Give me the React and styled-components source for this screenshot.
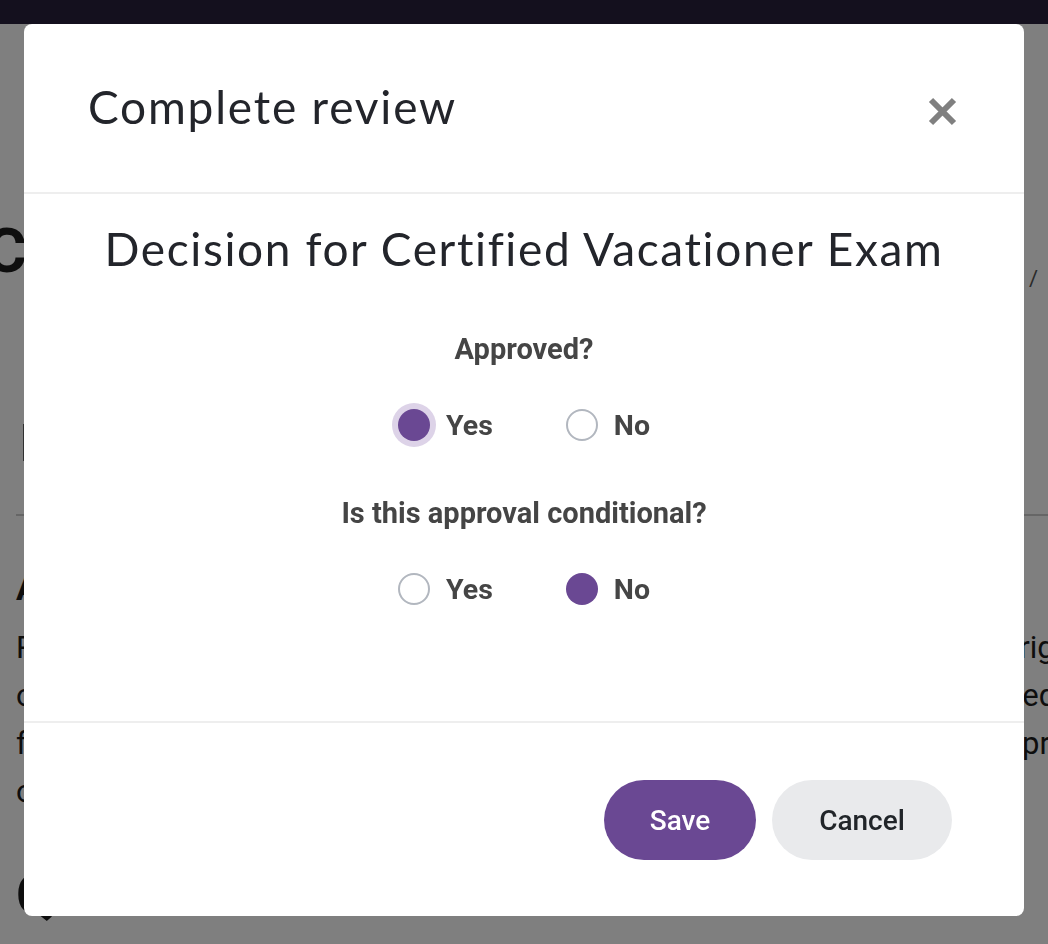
import React from "react";
import styled, { createGlobalStyle } from "styled-components";

const Global = createGlobalStyle`
  html, body { margin: 0; padding: 0; }
  body { width: 1048px; height: 944px; overflow: hidden; font-family: Roboto, "Liberation Sans", sans-serif; background: #fff; }
  * { box-sizing: border-box; }
`;

const Page = styled.div`
  position: relative;
  width: 1048px;
  height: 944px;
  overflow: hidden;
  background: #ffffff;
  color: #1c1c1c;
`;

const Nav = styled.div`
  height: 24px;
  background: #29203c;
`;

const Main = styled.div`
  padding-left: 16px;
`;

const TitleRow = styled.div`
  display: flex;
  justify-content: space-between;
  align-items: center;
  margin-top: 196px;
  height: 60px;
`;

const PageTitle = styled.h1`
  margin: 0 0 0 -30px;
  font-size: 62px;
  font-weight: 700;
  white-space: nowrap;
`;

const Crumbs = styled.div`
  font-size: 22px;
  color: #555;
  margin-right: 10px;
  margin-top: 56px;
  white-space: nowrap;
`;

const SectionTitle = styled.h2`
  margin: 134px 0 0 4px;
  font-size: 52px;
  font-weight: 700;
  line-height: 60px;
`;

const Rule = styled.hr`
  margin: 40px 0 0;
  border: 0;
  border-top: 2px solid #ccc;
`;

const SubTitle = styled.h3`
  margin: 52px 0 0;
  font-size: 34px;
  font-weight: 700;
  line-height: 40px;
`;

const Para = styled.p`
  margin: 16px 0 0;
  font-size: 31px;
  line-height: 48px;
`;

const Line = styled.span`
  display: block;
  white-space: nowrap;
`;

const QTitle = styled.h2`
  margin: 46px 0 0;
  font-size: 56px;
  font-weight: 700;
`;

const Overlay = styled.div`
  position: fixed;
  inset: 0;
  background: rgba(0, 0, 0, 0.5);
  display: flex;
  justify-content: center;
  align-items: flex-start;
  padding-top: 24px;
`;

const Modal = styled.div`
  width: 1000px;
  height: 892px;
  background: #fff;
  border-radius: 8px;
  display: flex;
  flex-direction: column;
  overflow: hidden;
`;

const Header = styled.div`
  height: 170px;
  display: flex;
  align-items: center;
  justify-content: space-between;
  padding: 0 67px 4px 64px;
  border-bottom: 2px solid #eeeeee;
`;

const ModalTitle = styled.h2`
  margin: 0;
  font-family: Lato, "Noto Sans", sans-serif;
  font-weight: 400;
  font-size: 46px;
  letter-spacing: 1.8px;
  color: #23252b;
`;

const CloseBtn = styled.button`
  border: 0;
  background: none;
  padding: 0;
  margin-top: 10px;
  width: 29px;
  height: 29px;
  display: flex;
  cursor: pointer;
`;

const Body = styled.div`
  flex: 1;
  display: flex;
  flex-direction: column;
  align-items: center;
  border-bottom: 2px solid #eeeeee;
`;

const Decision = styled.h3`
  margin: 28px 0 0;
  font-family: Lato, "Noto Sans", sans-serif;
  font-weight: 400;
  font-size: 46px;
  letter-spacing: 1.6px;
  line-height: 54px;
  color: #23252b;
`;

const Question = styled.div`
  margin-top: ${(p) => p.$mt}px;
  font-size: 29px;
  font-weight: 700;
  color: #454545;
  line-height: 34px;
`;

const RadioRow = styled.div`
  display: flex;
  align-items: center;
  gap: 73px;
  margin-top: 41px;
  height: 36px;
`;

const Option = styled.label`
  display: flex;
  align-items: center;
  gap: 16px;
  font-size: 28.5px;
  font-weight: 700;
  color: #454545;
`;

const Dot = styled.span`
  width: 32px;
  height: 32px;
  border-radius: 50%;
  background: ${(p) => (p.$on ? "#6a4893" : "#fff")};
  border: ${(p) => (p.$on ? "none" : "2px solid #b2b7bf")};
  box-shadow: ${(p) => (p.$focus ? "0 0 0 6px #ddd3e8" : "none")};
`;

const Footer = styled.div`
  height: 193px;
  display: flex;
  justify-content: flex-end;
  align-items: flex-start;
  gap: 16px;
  padding: 57px 72px 0 0;
`;

const Button = styled.button`
  height: 80px;
  width: ${(p) => p.$w}px;
  border: 0;
  border-radius: 40px;
  font-family: Roboto, "Liberation Sans", sans-serif;
  font-size: 28px;
  font-weight: 500;
  background: ${(p) => (p.$primary ? "#6a4893" : "#e9eaec")};
  color: ${(p) => (p.$primary ? "#fff" : "#212529")};
  cursor: pointer;
`;

function Radio({ label, on, focus }) {
  return (
    <Option>
      <Dot $on={on} $focus={focus} />
      {label}
    </Option>
  );
}

export default function App() {
  return (
    <>
      <Global />
      <Page>
        <Nav />
        <Main>
          <TitleRow>
            <PageTitle>Certification review</PageTitle>
            <Crumbs>Reviews /</Crumbs>
          </TitleRow>
          <SectionTitle>Review information</SectionTitle>
          <Rule />
          <SubTitle>About this exam</SubTitle>
          <Para>
            <Line>Please read the following instructions closely, and make sure to have the right</Line>
            <Line>of the applicant reviewed before the last decision is done, as it is always required</Line>
            <Line>for this certification Make sure that all the steps are complete before you proceed</Line>
            <Line>once you are done.</Line>
          </Para>
          <QTitle>Questions</QTitle>
        </Main>
        <Overlay>
          <Modal role="dialog">
            <Header>
              <ModalTitle>Complete review</ModalTitle>
              <CloseBtn aria-label="Close">
                <svg width="29" height="29" viewBox="0 0 29 29">
                  <path d="M3 3 L26 26 M26 3 L3 26" stroke="#808080" strokeWidth="6" strokeLinecap="butt" />
                </svg>
              </CloseBtn>
            </Header>
            <Body>
              <Decision>Decision for Certified Vacationer Exam</Decision>
              <Question $mt={56}>Approved?</Question>
              <RadioRow>
                <Radio label="Yes" on focus />
                <Radio label="No" />
              </RadioRow>
              <Question $mt={53}>Is this approval conditional?</Question>
              <RadioRow>
                <Radio label="Yes" />
                <Radio label="No" on />
              </RadioRow>
            </Body>
            <Footer>
              <Button $primary $w={152}>Save</Button>
              <Button $w={180}>Cancel</Button>
            </Footer>
          </Modal>
        </Overlay>
      </Page>
    </>
  );
}
